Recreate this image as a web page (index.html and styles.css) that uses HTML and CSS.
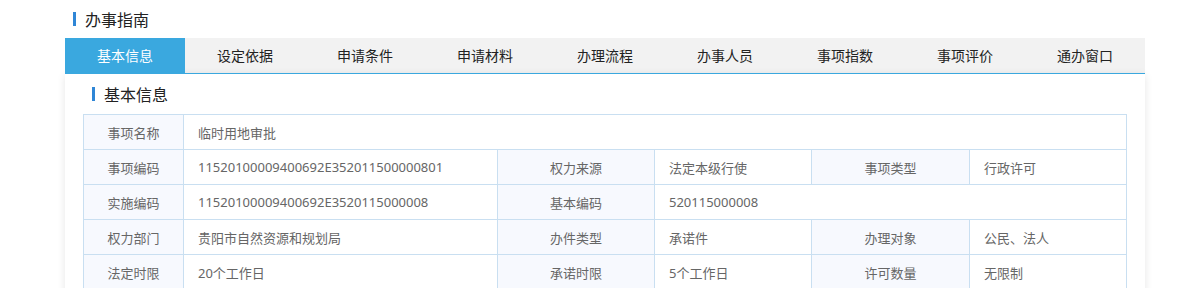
FILE: index.html
```html
<!DOCTYPE html>
<html lang="zh-CN">
<head>
    <meta charset="UTF-8">
    <title>办事指南</title>
    <link rel="stylesheet" href="styles.css">
</head>
<body>
    <div class="guide">
        <h2 class="title">办事指南</h2>
        <ul class="tabs">
            <li class="active">基本信息</li>
            <li>设定依据</li>
            <li>申请条件</li>
            <li>申请材料</li>
            <li>办理流程</li>
            <li>办事人员</li>
            <li>事项指数</li>
            <li>事项评价</li>
            <li>通办窗口</li>
        </ul>
        <div class="panel">
            <h3 class="subtitle">基本信息</h3>
            <table class="info">
                <colgroup>
                    <col style="width:100px">
                    <col style="width:314px">
                    <col style="width:157px">
                    <col style="width:157px">
                    <col style="width:158px">
                    <col style="width:157px">
                </colgroup>
                <tr>
                    <th>事项名称</th>
                    <td colspan="5">临时用地审批</td>
                </tr>
                <tr>
                    <th>事项编码</th>
                    <td>11520100009400692E352011500000801</td>
                    <th>权力来源</th>
                    <td>法定本级行使</td>
                    <th>事项类型</th>
                    <td>行政许可</td>
                </tr>
                <tr>
                    <th>实施编码</th>
                    <td>11520100009400692E3520115000008</td>
                    <th>基本编码</th>
                    <td colspan="3">520115000008</td>
                </tr>
                <tr>
                    <th>权力部门</th>
                    <td>贵阳市自然资源和规划局</td>
                    <th>办件类型</th>
                    <td>承诺件</td>
                    <th>办理对象</th>
                    <td>公民、法人</td>
                </tr>
                <tr>
                    <th>法定时限</th>
                    <td>20个工作日</td>
                    <th>承诺时限</th>
                    <td>5个工作日</td>
                    <th>许可数量</th>
                    <td>无限制</td>
                </tr>
            </table>
        </div>
    </div>
</body>
</html>
```

FILE: styles.css
```css
body {
    margin: 0;
    font-family: "Noto Sans", "Noto Sans CJK SC", sans-serif;
    background: #fff;
    color: #333;
}
.guide {
    width: 1080px;
    margin-left: 65px;
}
.title {
    display: flex;
    align-items: center;
    height: 38px;
    margin: 0;
    padding-left: 8px;
    font-size: 16px;
    font-weight: normal;
    color: #222;
}
.title::before,
.subtitle::before {
    content: "";
    width: 3px;
    height: 14px;
    margin-right: 9px;
    background: #2f86d6;
}
.tabs {
    display: flex;
    margin: 0;
    padding: 0;
    list-style: none;
    background: #f2f2f2;
}
.tabs li {
    width: 120px;
    height: 35px;
    line-height: 35px;
    text-align: center;
    font-size: 14px;
    color: #222;
}
.tabs li.active {
    background: #3aa8df;
    color: #fff;
}
.panel {
    padding: 0 18px 20px;
    border-top: 1px solid #3aa8df;
    box-shadow: 0 2px 8px rgba(0,0,0,0.1);
}
.subtitle {
    display: flex;
    align-items: center;
    height: 40px;
    margin: 0;
    padding-left: 9px;
    font-size: 16px;
    font-weight: normal;
    color: #222;
}
.info {
    width: 1044px;
    table-layout: fixed;
    border-collapse: collapse;
    font-size: 13px;
    color: #666;
}
.info th,
.info td {
    height: 34px;
    padding: 0 14px;
    border: 1px solid #c9dff1;
    white-space: nowrap;
}
.info th {
    background: #f7f9fe;
    font-weight: normal;
    text-align: center;
}
.info td {
    text-align: left;
}
```
